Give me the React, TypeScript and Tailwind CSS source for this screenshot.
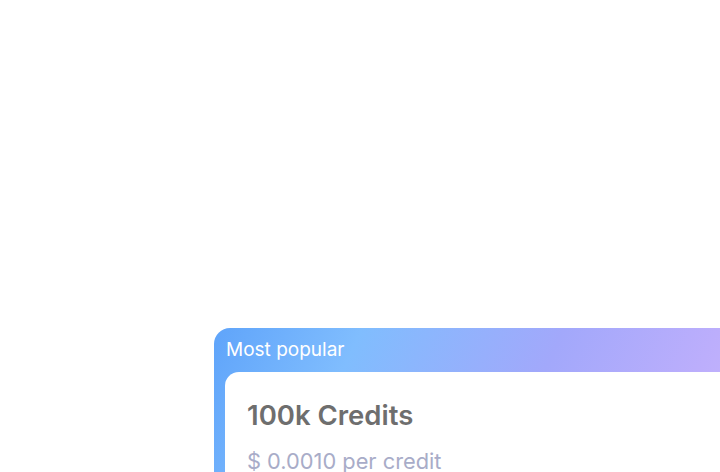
import { FC } from "react";

const PlanCard: FC = () => {
  return (
    <div className="w-[560px] shrink-0 rounded-2xl bg-[linear-gradient(115deg,#5fa4fa_0%,#80bdfe_22%,#a2a8fb_52%,#bcaefc_75%,#d2bdfc_100%)]">
      <div className="h-[44px] flex items-center px-3 text-[19px] text-white">
        Most popular
      </div>
      <div className="ml-[11px] h-[200px] rounded-t-[14px] bg-white px-[22px] pt-[27px]">
        <h2 className="text-[27.5px] leading-8 font-semibold text-[#6e6e6e]">
          100k Credits
        </h2>
        <p className="mt-[16px] text-[21.8px] leading-7 text-[#a8acc8]">
          $ 0.0010 per credit
        </p>
      </div>
    </div>
  );
};

const App: FC = () => {
  return (
    <div
      className="h-[472px] w-[720px] overflow-hidden bg-white pl-[214px] pt-[328px]"
      style={{ fontFamily: "Inter, 'Noto Sans', sans-serif" }}
    >
      <PlanCard />
    </div>
  );
};

export default App;
